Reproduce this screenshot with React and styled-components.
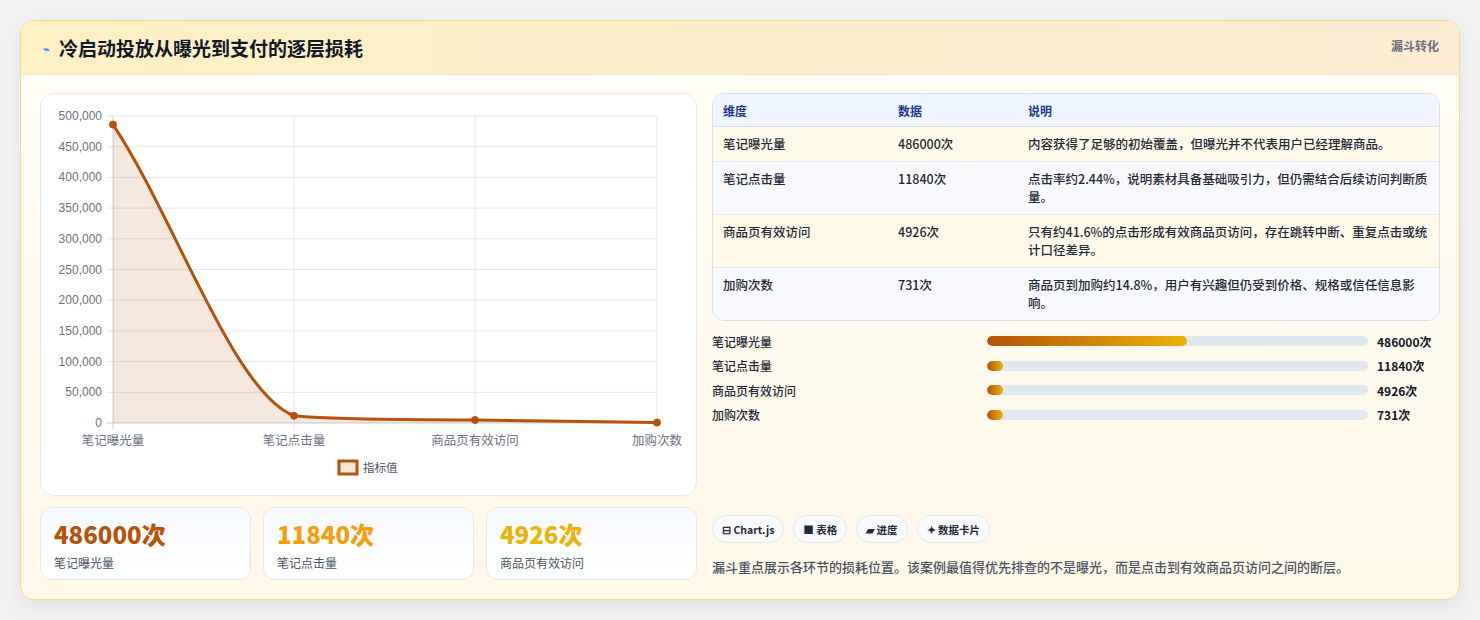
import React from "react";
import styled, { createGlobalStyle } from "styled-components";

const Global = createGlobalStyle`
  body { margin: 0; background: #f1f1f1; font-family: "Noto Sans CJK SC", "Noto Sans", sans-serif; color: #1f2937; }
`;

const rows = [
  { name: "笔记曝光量", val: 486000, desc: "内容获得了足够的初始覆盖，但曝光并不代表用户已经理解商品。" },
  { name: "笔记点击量", val: 11840, desc: "点击率约2.44%，说明素材具备基础吸引力，但仍需结合后续访问判断质量。" },
  { name: "商品页有效访问", val: 4926, desc: "只有约41.6%的点击形成有效商品页访问，存在跳转中断、重复点击或统计口径差异。" },
  { name: "加购次数", val: 731, desc: "商品页到加购约14.8%，用户有兴趣但仍受到价格、规格或信任信息影响。" },
];

const Page = styled.div`
  padding: 20px;
`;
const Card = styled.div`
  width: 1440px;
  height: 580px;
  box-sizing: border-box;
  border: 1px solid #f3d98a;
  border-radius: 14px;
  background: linear-gradient(180deg, #fffdf6 0%, #fff7e8 100%);
  box-shadow: 0 8px 22px rgba(0, 0, 0, 0.06);
  overflow: hidden;
  display: flex;
  flex-direction: column;
`;
const Header = styled.div`
  height: 54px;
  flex: none;
  box-sizing: border-box;
  padding: 0 20px 0 22px;
  display: flex;
  align-items: center;
  justify-content: space-between;
  background: linear-gradient(90deg, #fdf0c4 0%, #fdebd2 100%);
  border-bottom: 1px solid #e8e4da;
`;
const Title = styled.h2`
  margin: 0;
  font-size: 19px;
  font-weight: 700;
  color: #111827;
  display: flex;
  align-items: center;
  gap: 9px;
`;
const Tag = styled.span`
  font-size: 12px;
  font-weight: 700;
  color: #6b7280;
  align-self: flex-start;
  margin-top: 16px;
`;
const Body = styled.div`
  flex: 1;
  display: grid;
  grid-template-columns: 657px 728px;
  gap: 15px;
  padding: 18px 19px 19px 19px;
`;
const Left = styled.div`
  display: flex;
  flex-direction: column;
  gap: 11px;
`;
const ChartCard = styled.div`
  height: 403px;
  background: #fff;
  border: 1px solid #e5e7eb;
  border-radius: 14px;
  box-sizing: border-box;
`;
const Stats = styled.div`
  display: grid;
  grid-template-columns: repeat(3, 1fr);
  gap: 12px;
`;
const Stat = styled.div`
  height: 73px;
  box-sizing: border-box;
  border: 1px solid #e3e8f0;
  border-radius: 12px;
  background: linear-gradient(180deg, #f6f9fd, #ffffff);
  padding: 10px 13px;
`;
const StatNum = styled.div`
  font-size: 24px;
  font-weight: 800;
  color: ${(p) => p.$c};
  line-height: 32px;
`;
const StatLabel = styled.div`
  font-size: 12px;
  color: #4b5563;
  margin-top: 4px;
`;
const Right = styled.div`
  display: flex;
  flex-direction: column;
`;
const Table = styled.table`
  width: 100%;
  border-collapse: separate;
  border-spacing: 0;
  border: 1px solid #d6dde8;
  border-radius: 12px;
  overflow: hidden;
  font-size: 12.5px;
  font-weight: 500;
  th {
    text-align: left;
    height: 32px;
    padding: 0 10px;
    color: #1e3a8a;
    background: #eef5ff;
    border-bottom: 1px solid #d6dde8;
    font-weight: 700;
    font-size: 12px;
  }
  td {
    padding: 8px 10px;
    line-height: 18px;
    color: #1f2937;
    border-bottom: 1px solid #e5e7eb;
    vertical-align: top;
  }
  tr:last-child td { border-bottom: none; }
  tbody tr:nth-child(odd) td { background: #fff9ea; }
  tbody tr:nth-child(even) td { background: #f7f9fc; }
`;
const Bars = styled.div`
  margin-top: 11px;
  display: flex;
  flex-direction: column;
  gap: 6px;
`;
const BarRow = styled.div`
  display: grid;
  grid-template-columns: 275px 381px 1fr;
  align-items: center;
  height: 18.5px;
  font-size: 12px;
  font-weight: 500;
`;
const Track = styled.div`
  height: 10px;
  background: #e2e8f0;
  border-radius: 5px;
  overflow: hidden;
`;
const Fill = styled.div`
  height: 100%;
  min-width: 16px;
  border-radius: 5px;
  background: linear-gradient(90deg, #b45309, #eab308);
`;
const BarVal = styled.span`
  padding-left: 9px;
  font-weight: 700;
  color: #111827;
`;
const Chips = styled.div`
  margin-top: auto;
  display: flex;
  gap: 9px;
`;
const Chip = styled.span`
  height: 28px;
  box-sizing: border-box;
  padding: 0 9px;
  border: 1px solid #e3e8f0;
  border-radius: 14px;
  background: #f8fafc;
  font-size: 10.5px;
  font-weight: 700;
  color: #1f2937;
  display: inline-flex;
  align-items: center;
  gap: 3px;
`;
const Note = styled.p`
  margin: 14px 0 4px;
  font-size: 13px;
  font-weight: 500;
  color: #4b5563;
`;

const max = 500000;
const yOf = (v) => 329 - (v / max) * 307;
const xs = [72, 253, 434, 616];

function Chart() {
  const pts = rows.map((r, i) => [xs[i], yOf(r.val)]);
  const line = `M${pts[0][0]},${pts[0][1]} C132,120 193,300 ${pts[1][0]},${pts[1][1]} C313,327 374,325 ${pts[2][0]},${pts[2][1]} C494,327 555,328 ${pts[3][0]},${pts[3][1]}`;
  const ticks = [0, 50000, 100000, 150000, 200000, 250000, 300000, 350000, 400000, 450000, 500000];
  return (
    <svg width="655" height="401" style={{ display: "block" }}>
      {ticks.map((t) => (
        <g key={t}>
          <line x1="66" x2="616" y1={yOf(t)} y2={yOf(t)} stroke={t === 0 ? "#c9ced6" : "#e5e7eb"} />
          <text x="61" y={yOf(t) + 4} textAnchor="end" fontSize="12" fill="#6b7280" fontFamily="Liberation Sans, sans-serif">
            {t.toLocaleString("en-US")}
          </text>
        </g>
      ))}
      {xs.map((x, i) => (
        <g key={x}>
          <line x1={x} x2={x} y1="22" y2="335" stroke={i === 0 ? "#c9ced6" : "#e5e7eb"} />
          <text x={x} y="351" textAnchor="middle" fontSize="12.5" fill="#6b7280">{rows[i].name}</text>
        </g>
      ))}
      <path d={`${line} L616,329 L72,329 Z`} fill="rgba(180,83,9,0.13)" />
      <path d={line} fill="none" stroke="#b45309" strokeWidth="3" />
      {pts.map(([x, y]) => (
        <circle key={x} cx={x} cy={y} r="3.5" fill="#b45309" stroke="#b45309" />
      ))}
      <rect x="298" y="367" width="18" height="13" fill="rgba(180,83,9,0.13)" stroke="#b45309" strokeWidth="3" />
      <text x="322" y="378" fontSize="11.5" fill="#4b5563">指标值</text>
    </svg>
  );
}

const statColors = ["#b45309", "#f59e0b", "#eab308"];

export default function App() {
  return (
    <Page>
      <Global />
      <Card>
        <Header>
          <Title>
            <span style={{ fontSize: 11, color: "#3b82f6" }}>⌁</span>
            冷启动投放从曝光到支付的逐层损耗
          </Title>
          <Tag>漏斗转化</Tag>
        </Header>
        <Body>
          <Left>
            <ChartCard>
              <Chart />
            </ChartCard>
            <Stats>
              {rows.slice(0, 3).map((r, i) => (
                <Stat key={r.name}>
                  <StatNum $c={statColors[i]}>{r.val}次</StatNum>
                  <StatLabel>{r.name}</StatLabel>
                </Stat>
              ))}
            </Stats>
          </Left>
          <Right>
            <Table>
              <colgroup>
                <col style={{ width: 175 }} />
                <col style={{ width: 130 }} />
                <col />
              </colgroup>
              <thead>
                <tr><th>维度</th><th>数据</th><th>说明</th></tr>
              </thead>
              <tbody>
                {rows.map((r) => (
                  <tr key={r.name}>
                    <td>{r.name}</td>
                    <td>{r.val}次</td>
                    <td>{r.desc}</td>
                  </tr>
                ))}
              </tbody>
            </Table>
            <Bars>
              {rows.map((r) => (
                <BarRow key={r.name}>
                  <span>{r.name}</span>
                  <Track>
                    <Fill style={{ width: `${(r.val / 486000) * 52.5}%` }} />
                  </Track>
                  <BarVal>{r.val}次</BarVal>
                </BarRow>
              ))}
            </Bars>
            <Chips>
              <Chip>⊟ Chart.js</Chip>
              <Chip>■ 表格</Chip>
              <Chip>▰ 进度</Chip>
              <Chip>✦ 数据卡片</Chip>
            </Chips>
            <Note>漏斗重点展示各环节的损耗位置。该案例最值得优先排查的不是曝光，而是点击到有效商品页访问之间的断层。</Note>
          </Right>
        </Body>
      </Card>
    </Page>
  );
}
